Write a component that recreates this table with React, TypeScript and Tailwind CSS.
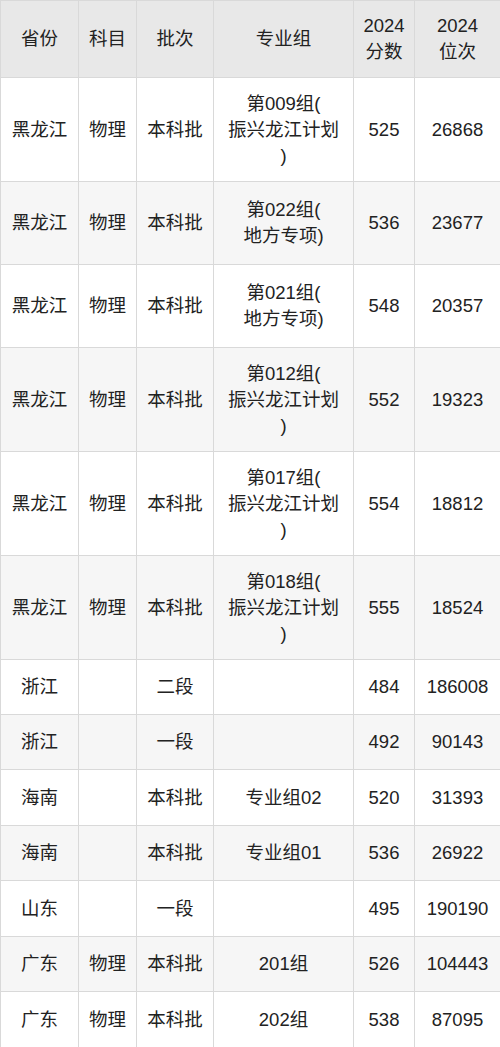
import React from 'react';

type Row = {
    prov: string;
    subj: string;
    batch: string;
    group: string[];
    score: string;
    rank: string;
    h: string;
};

const rows: Row[] = [
    { prov: '黑龙江', subj: '物理', batch: '本科批', group: ['第009组(', '振兴龙江计划', ')'], score: '525', rank: '26868', h: 'h-[104px]' },
    { prov: '黑龙江', subj: '物理', batch: '本科批', group: ['第022组(', '地方专项)'], score: '536', rank: '23677', h: 'h-[83px]' },
    { prov: '黑龙江', subj: '物理', batch: '本科批', group: ['第021组(', '地方专项)'], score: '548', rank: '20357', h: 'h-[83px]' },
    { prov: '黑龙江', subj: '物理', batch: '本科批', group: ['第012组(', '振兴龙江计划', ')'], score: '552', rank: '19323', h: 'h-[104px]' },
    { prov: '黑龙江', subj: '物理', batch: '本科批', group: ['第017组(', '振兴龙江计划', ')'], score: '554', rank: '18812', h: 'h-[104px]' },
    { prov: '黑龙江', subj: '物理', batch: '本科批', group: ['第018组(', '振兴龙江计划', ')'], score: '555', rank: '18524', h: 'h-[104px]' },
    { prov: '浙江', subj: '', batch: '二段', group: [], score: '484', rank: '186008', h: 'h-[55px]' },
    { prov: '浙江', subj: '', batch: '一段', group: [], score: '492', rank: '90143', h: 'h-[55px]' },
    { prov: '海南', subj: '', batch: '本科批', group: ['专业组02'], score: '520', rank: '31393', h: 'h-[56px]' },
    { prov: '海南', subj: '', batch: '本科批', group: ['专业组01'], score: '536', rank: '26922', h: 'h-[55px]' },
    { prov: '山东', subj: '', batch: '一段', group: [], score: '495', rank: '190190', h: 'h-[56px]' },
    { prov: '广东', subj: '物理', batch: '本科批', group: ['201组'], score: '526', rank: '104443', h: 'h-[55px]' },
    { prov: '广东', subj: '物理', batch: '本科批', group: ['202组'], score: '538', rank: '87095', h: 'h-[56px]' },
];

const cell = 'border border-[#d9d9d9] text-center align-middle px-1 whitespace-nowrap';

const App: React.FC = () => {
    return (
        <div className="w-[500px] h-[1047px] bg-white overflow-hidden text-[18.5px] leading-[26px] text-[#222]" style={{ fontFamily: '"Liberation Sans", "Noto Sans CJK SC", sans-serif' }}>
            <table className="w-[500px] table-fixed border-collapse">
                <colgroup>
                    <col className="w-[78px]" />
                    <col className="w-[58px]" />
                    <col className="w-[77px]" />
                    <col className="w-[140px]" />
                    <col className="w-[61px]" />
                    <col className="w-[86px]" />
                </colgroup>
                <thead>
                    <tr className="h-[77px] bg-[#e8e8e8]">
                        <th className={`${cell} font-normal`}>省份</th>
                        <th className={`${cell} font-normal`}>科目</th>
                        <th className={`${cell} font-normal`}>批次</th>
                        <th className={`${cell} font-normal`}>专业组</th>
                        <th className={`${cell} font-normal`}>2024<br />分数</th>
                        <th className={`${cell} font-normal`}>2024<br />位次</th>
                    </tr>
                </thead>
                <tbody>
                    {rows.map((r, i) => (
                        <tr key={i} className={`${r.h} ${i % 2 === 1 ? 'bg-[#f6f6f6]' : 'bg-white'}`}>
                            <td className={cell}>{r.prov}</td>
                            <td className={cell}>{r.subj}</td>
                            <td className={cell}>{r.batch}</td>
                            <td className={cell}>
                                {r.group.map((g, j) => (
                                    <div key={j}>{g}</div>
                                ))}
                            </td>
                            <td className={cell}>{r.score}</td>
                            <td className={cell}>{r.rank}</td>
                        </tr>
                    ))}
                </tbody>
            </table>
        </div>
    );
};

export default App;
